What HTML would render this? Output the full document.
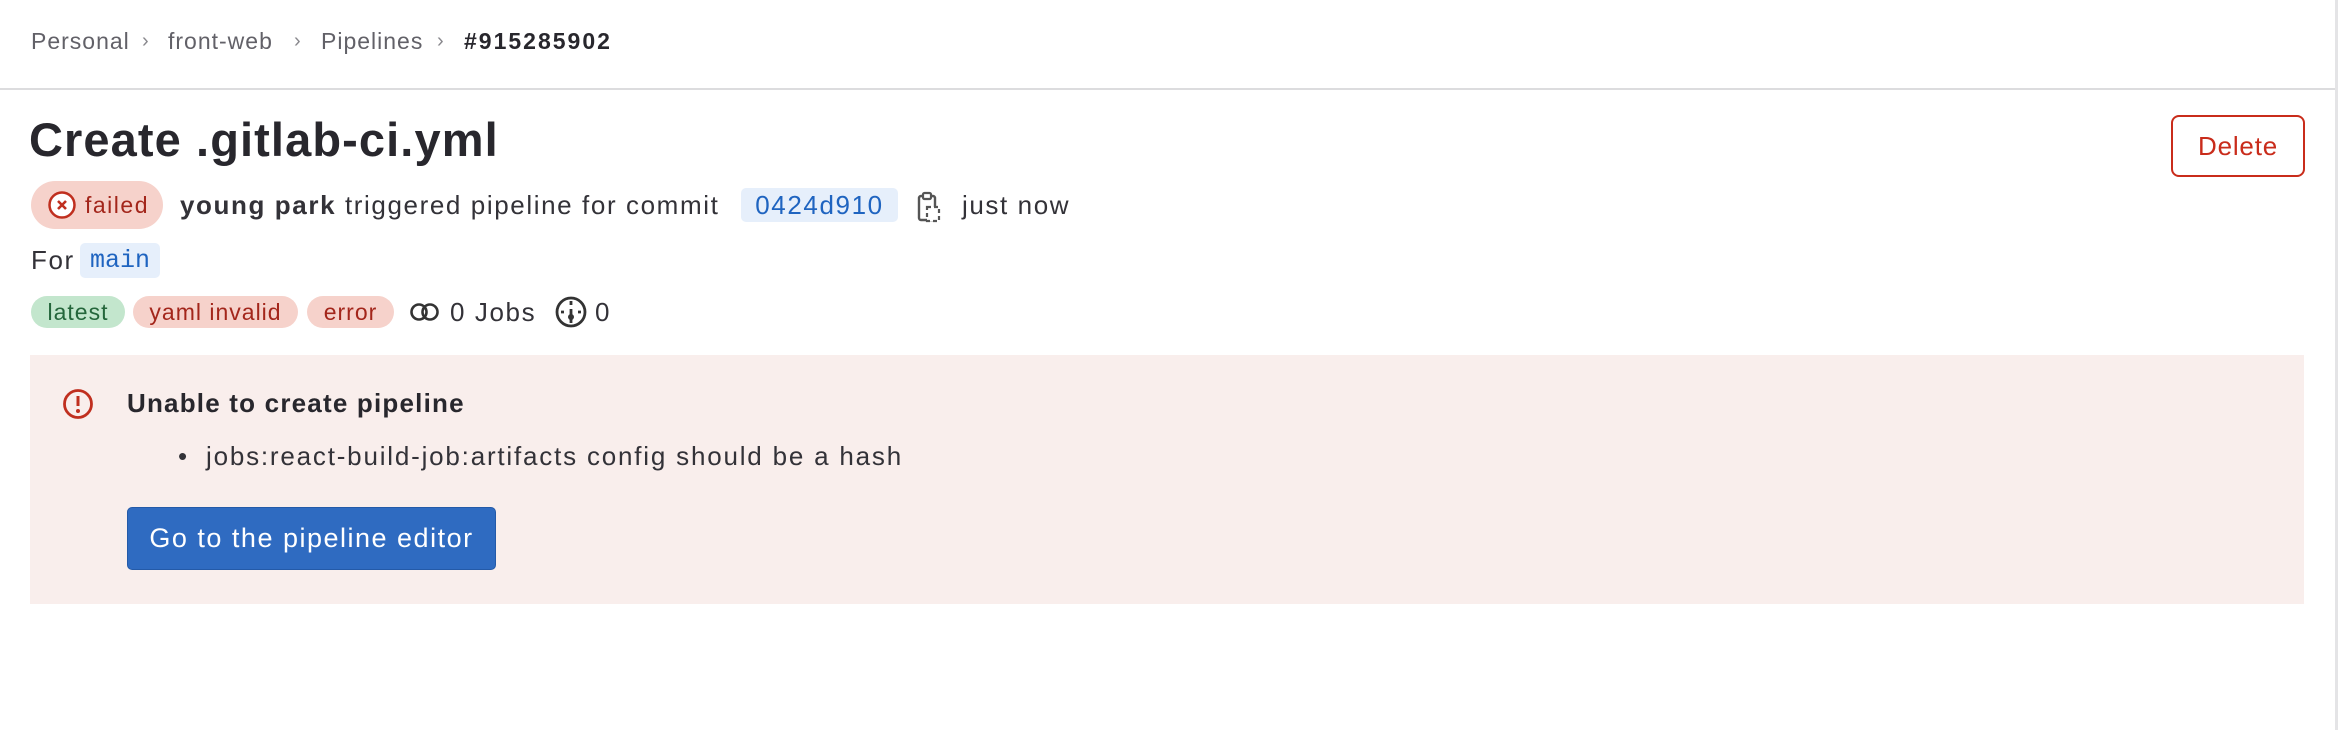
<!DOCTYPE html>
<html><head><meta charset="utf-8"><style>
*{box-sizing:border-box;margin:0;padding:0}
body{width:2338px;height:730px;background:#fff;font-family:"Liberation Sans",sans-serif;color:#333238;position:relative;overflow:hidden}
.abs{position:absolute;white-space:nowrap}
.bc{top:24px;font-size:23px;letter-spacing:1px;color:#626168;line-height:34px}
.sep{color:#89888d;font-size:20px;letter-spacing:0}
.pill{position:absolute;border-radius:24px;display:flex;align-items:center;justify-content:center;font-size:23px;letter-spacing:1px}
.t{font-size:26px;letter-spacing:1.6px;line-height:34px}
</style></head><body>
<div class="abs bc" style="left:31px">Personal</div>
<div class="abs bc sep" style="left:142px">›</div>
<div class="abs bc" style="left:168px">front-web</div>
<div class="abs bc sep" style="left:294px">›</div>
<div class="abs bc" style="left:321px">Pipelines</div>
<div class="abs bc sep" style="left:437px">›</div>
<div class="abs bc" style="left:464px;color:#28272d;font-weight:bold;letter-spacing:2px">#915285902</div>
<div class="abs" style="left:0;top:88px;width:2338px;height:2px;background:#dcdcde"></div>
<div class="abs" style="left:2335px;top:0;width:3px;height:730px;background:#e4e4e6"></div>

<div class="abs" style="left:29px;top:112px;font-size:47px;font-weight:bold;color:#28272d;letter-spacing:1.1px">Create .gitlab-ci.yml</div>
<div class="abs" style="left:2171px;top:115px;width:134px;height:62px;border:2px solid #c92c1b;border-radius:8px;color:#c92c1b;font-size:26px;letter-spacing:0.8px;display:flex;align-items:center;justify-content:center">Delete</div>

<div class="pill" style="left:31px;top:181px;width:132px;height:48px;background:#f6d2cb;color:#a3261b;justify-content:flex-start;padding-left:16px;letter-spacing:1.5px">
<svg width="30" height="30" viewBox="0 0 30 30" style="margin-right:8px"><circle cx="15" cy="15" r="12.5" fill="#fff" stroke="#c02f1f" stroke-width="2.5"/><path d="M11 11L19 19M19 11L11 19" stroke="#c02f1f" stroke-width="2.6"/></svg>failed</div>
<div class="abs t" style="left:180px;top:188px"><b>young park</b> triggered pipeline for commit</div>
<div class="abs t" style="left:741px;top:188px;width:157px;height:34px;background:#e6effb;border-radius:5px;color:#1f64c0;text-align:center">0424d910</div>
<svg class="abs" style="left:916px;top:190px" width="26" height="34" viewBox="0 0 26 34"><rect x="3" y="6" width="16" height="24" rx="2" fill="none" stroke="#555" stroke-width="2.4"/><rect x="7" y="3" width="8" height="6" rx="1.5" fill="#fff" stroke="#555" stroke-width="2.2"/><rect x="11" y="17" width="12" height="14" fill="#fff" stroke="#555" stroke-width="2.2" stroke-dasharray="4 3"/></svg>
<div class="abs t" style="left:962px;top:188px">just now</div>

<div class="abs t" style="left:31px;top:243px">For</div>
<div class="abs" style="left:80px;top:243px;width:80px;height:35px;background:#e6effb;border-radius:5px;color:#1f64c0;font-family:'Liberation Mono',monospace;font-size:25px;text-align:center;line-height:35px">main</div>

<div class="pill" style="left:31px;top:296px;width:94px;height:32px;background:#c3e6cd;color:#24663b">latest</div>
<div class="pill" style="left:133px;top:296px;width:165px;height:32px;background:#f6d2cb;color:#a3261b">yaml invalid</div>
<div class="pill" style="left:307px;top:296px;width:87px;height:32px;background:#f6d2cb;color:#a3261b">error</div>
<svg class="abs" style="left:409px;top:299px" width="32" height="26" viewBox="0 0 32 26"><circle cx="10" cy="13" r="7.5" fill="none" stroke="#333" stroke-width="2.6"/><circle cx="21" cy="13" r="7.5" fill="none" stroke="#333" stroke-width="2.6"/></svg>
<div class="abs t" style="left:450px;top:295px">0 Jobs</div>
<svg class="abs" style="left:554px;top:295px" width="34" height="34" viewBox="0 0 34 34"><circle cx="17" cy="17" r="14" fill="none" stroke="#333" stroke-width="2.8"/><path d="M17 6V10M17 14V22M7 17H10M24 17H27M17 24V28" stroke="#333" stroke-width="2.8"/><circle cx="17" cy="22" r="3" fill="#333"/></svg>
<div class="abs t" style="left:595px;top:295px">0</div>

<div class="abs" style="left:30px;top:355px;width:2274px;height:249px;background:#f9eeec"></div>
<svg class="abs" style="left:62px;top:388px" width="32" height="32" viewBox="0 0 32 32"><circle cx="16" cy="16" r="13.5" fill="none" stroke="#c02f1f" stroke-width="2.8"/><path d="M16 8V18" stroke="#c02f1f" stroke-width="3"/><circle cx="16" cy="23" r="2" fill="#c02f1f"/></svg>
<div class="abs t" style="left:127px;top:386px;font-weight:bold;color:#28272d;letter-spacing:1.2px">Unable to create pipeline</div>
<div class="abs t" style="left:178px;top:439px">•</div>
<div class="abs t" style="left:206px;top:439px;letter-spacing:1.8px">jobs:react-build-job:artifacts config should be a hash</div>
<div class="abs" style="left:127px;top:507px;width:369px;height:63px;background:#2f6bc1;border:1px solid #245aa8;border-radius:5px;color:#fff;font-size:27px;letter-spacing:1.5px;display:flex;align-items:center;justify-content:center">Go to the pipeline editor</div>
</body></html>
